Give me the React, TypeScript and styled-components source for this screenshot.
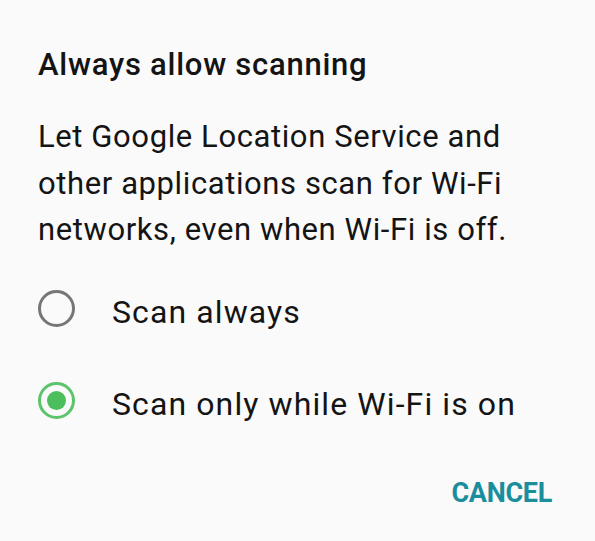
import React from "react";
import styled, { createGlobalStyle } from "styled-components";

const GlobalStyle = createGlobalStyle`
  html, body {
    margin: 0;
    padding: 0;
    background: #fafafa;
  }
  body {
    font-family: Roboto, "Noto Sans", sans-serif;
    color: #141414;
  }
`;

const Dialog = styled.div`
  width: 595px;
  height: 541px;
  box-sizing: border-box;
  padding: 45px 30px 0 38px;
  display: flex;
  flex-direction: column;
  background: #fafafa;
`;

const Title = styled.h1`
  margin: 0;
  font-size: 31px;
  font-weight: 500;
  line-height: 40px;
  letter-spacing: 0.75px;
  color: #141414;
`;

const Message = styled.p`
  margin: 29px 0 0;
  font-size: 31px;
  font-weight: 400;
  line-height: 46.5px;
  letter-spacing: 0.6px;
  color: #141414;
  white-space: nowrap;
`;

const Options = styled.div`
  margin-top: 25px;
  display: flex;
  flex-direction: column;
  gap: 32px;
`;

const Option = styled.label`
  height: 60px;
  display: flex;
  align-items: center;
  gap: 37px;
  cursor: pointer;
`;

const Radio = styled.span<{ $checked?: boolean }>`
  width: 37px;
  height: 37px;
  box-sizing: border-box;
  border-radius: 50%;
  border: 3px solid ${({ $checked }) => ($checked ? "#5cc46b" : "#767676")};
  display: flex;
  align-items: center;
  justify-content: center;
  flex-shrink: 0;

  &::after {
    content: "";
    display: ${({ $checked }) => ($checked ? "block" : "none")};
    width: 19px;
    height: 19px;
    border-radius: 50%;
    background: #4cbe5c;
  }
`;

const OptionLabel = styled.span`
  font-size: 32px;
  line-height: 36px;
  letter-spacing: 1.1px;
  padding-top: 6px;
  color: #141414;
  white-space: nowrap;
`;

const Actions = styled.div`
  margin-top: 44px;
  padding-right: 13px;
  display: flex;
  justify-content: flex-end;
`;

const TextButton = styled.button`
  background: transparent;
  border: none;
  padding: 0;
  font-family: Roboto, "Noto Sans", sans-serif;
  font-size: 27px;
  font-weight: 700;
  line-height: 36px;
  letter-spacing: -0.3px;
  color: #1b8e9e;
  cursor: pointer;
`;

const options = [
  { label: "Scan always", checked: false },
  { label: "Scan only while Wi-Fi is on", checked: true },
];

export default function App() {
  return (
    <>
      <GlobalStyle />
      <Dialog>
        <Title>Always allow scanning</Title>
        <Message>
          Let Google Location Service and
          <br />
          other applications scan for Wi-Fi
          <br />
          networks, even when Wi-Fi is off.
        </Message>
        <Options>
          {options.map((o) => (
            <Option key={o.label}>
              <Radio $checked={o.checked} />
              <OptionLabel>{o.label}</OptionLabel>
            </Option>
          ))}
        </Options>
        <Actions>
          <TextButton>CANCEL</TextButton>
        </Actions>
      </Dialog>
    </>
  );
}
